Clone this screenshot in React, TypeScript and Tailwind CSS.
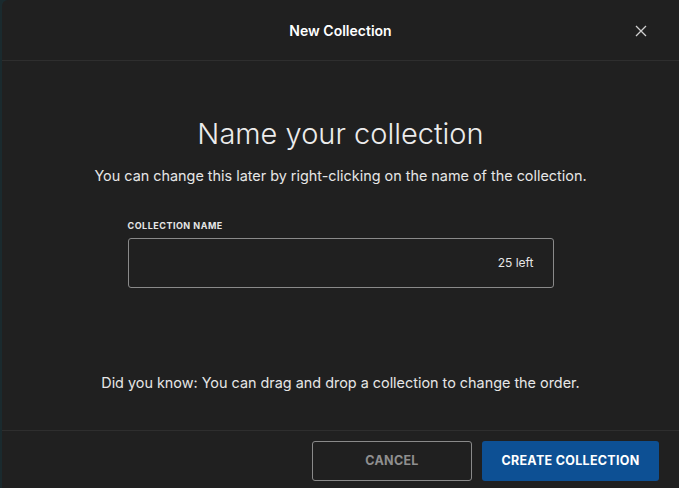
export default function App() {
  return (
    <div className="w-[679px] h-[488px] bg-[#1a2a2e] flex" style={{ fontFamily: "Inter, 'Noto Sans', sans-serif" }}>
      <div className="ml-[2px] flex-1 bg-[#202020] rounded-tl-[6px] flex flex-col text-[#e6e6e6]">
        <div className="h-[61px] border-b border-[#2e2e2e] flex items-center justify-center relative">
          <span className="text-[14px] font-semibold text-white">New Collection</span>
          <svg className="absolute right-[32px] top-[25px]" width="12" height="12" viewBox="0 0 12 12" stroke="#d0d0d0" strokeWidth="1.3"><path d="M1 1L11 11M11 1L1 11" /></svg>
        </div>
        <div className="flex-1 flex flex-col items-center">
          <div className="mt-[56px] text-[29px] font-light text-[#ececec] leading-[34px]">Name your collection</div>
          <div className="mt-[14px] text-[14.4px] text-[#e6e6e6]">You can change this later by right-clicking on the name of the collection.</div>
          <div className="mt-[32px] w-[426px]">
            <div className="text-[9px] font-bold tracking-[0.5px] text-[#e6e6e6]">COLLECTION NAME</div>
            <div className="mt-[6px] h-[50px] border border-[#8a8a8a] rounded-[3px] flex items-center justify-end pr-[19px] text-[12px] text-[#e6e6e6]">25 left</div>
          </div>
          <div className="mt-[84px] text-[14.4px] text-[#e6e6e6]">Did you know: You can drag and drop a collection to change the order.</div>
        </div>
        <div className="h-[58px] border-t border-[#2e2e2e] flex items-start justify-end gap-[10px] pt-[10px] pr-[20px]">
          <button className="w-[160px] h-[40px] border border-[#8a8a8a] rounded-[3px] text-[12.5px] font-bold text-[#8f8f8f] tracking-[0.3px]">CANCEL</button>
          <button className="w-[177px] h-[40px] bg-[#0d5094] rounded-[3px] text-[12.5px] font-bold text-white tracking-[0.3px]">CREATE COLLECTION</button>
        </div>
      </div>
    </div>
  );
}
